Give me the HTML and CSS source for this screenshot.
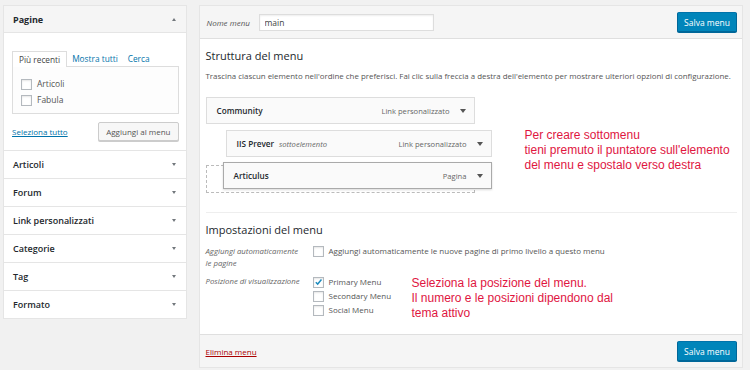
FILE: index.html
```html
<!DOCTYPE html>
<html lang="it">
<head>
  <meta charset="UTF-8">
  <meta name="viewport" content="width=device-width, initial-scale=1">
  <title>Menu</title>
  <link rel="stylesheet" href="styles.css">
</head>
<body>
  <div class="wrap">
    <div class="sidebar">
      <div class="acc open">
        <div class="acc-title">Pagine <span class="arrow up"></span></div>
        <div class="acc-body">
          <div class="tabs">
            <span class="tab active">Più recenti</span>
            <span class="tab">Mostra tutti</span>
            <span class="tab">Cerca</span>
          </div>
          <div class="tab-panel">
            <label class="check-row"><span class="cb"></span>Articoli</label>
            <label class="check-row"><span class="cb"></span>Fabula</label>
          </div>
          <div class="add-row">
            <a class="select-all" href="#">Seleziona tutto</a>
            <button class="btn">Aggiungi al menu</button>
          </div>
        </div>
      </div>
      <div class="acc"><div class="acc-title">Articoli <span class="arrow"></span></div></div>
      <div class="acc"><div class="acc-title">Forum <span class="arrow"></span></div></div>
      <div class="acc"><div class="acc-title">Link personalizzati <span class="arrow"></span></div></div>
      <div class="acc"><div class="acc-title">Categorie <span class="arrow"></span></div></div>
      <div class="acc"><div class="acc-title">Tag <span class="arrow"></span></div></div>
      <div class="acc"><div class="acc-title">Formato <span class="arrow"></span></div></div>
    </div>

    <div class="menu-edit">
      <div class="menu-head">
        <span class="name-label">Nome menu</span>
        <input class="name-input" type="text" value="main">
        <button class="btn primary">Salva menu</button>
      </div>

      <div class="menu-body">
        <h3>Struttura del menu</h3>
        <p class="desc">Trascina ciascun elemento nell'ordine che preferisci. Fai clic sulla freccia a destra dell'elemento per mostrare ulteriori opzioni di configurazione.</p>

        <div class="structure">
          <ul class="menu-items">
            <li class="item">
              <div class="bar"><span class="title">Community</span><span class="type">Link personalizzato</span><span class="arrow"></span></div>
            </li>
            <li class="item depth-1">
              <div class="bar"><span class="title">IIS Prever</span><span class="sub">sottoelemento</span><span class="type">Link personalizzato</span><span class="arrow"></span></div>
            </li>
            <li class="placeholder">
              <div class="bar dragging"><span class="title">Articulus</span><span class="type">Pagina</span><span class="arrow"></span></div>
            </li>
          </ul>
          <p class="note note-sub">Per creare sottomenu<br>tieni premuto il puntatore sull'elemento<br>del menu e spostalo verso destra</p>
        </div>

        <div class="settings">
          <h3>Impostazioni del menu</h3>
          <div class="setting-row auto-add">
            <div class="setting-label">Aggiungi automaticamente le pagine</div>
            <label class="check-row"><span class="cb"></span>Aggiungi automaticamente le nuove pagine di primo livello a questo menu</label>
          </div>
          <div class="setting-row">
            <div class="setting-label">Posizione di visualizzazione</div>
            <div class="locations">
              <label class="check-row"><span class="cb checked"><svg width="10" height="10" viewBox="0 0 10 10"><path d="M2 5.2 L4.1 7.3 L8.3 2.2" fill="none" stroke="#1e8cbe" stroke-width="1.6"/></svg></span>Primary Menu</label>
              <label class="check-row"><span class="cb"></span>Secondary Menu</label>
              <label class="check-row"><span class="cb"></span>Social Menu</label>
            </div>
            <p class="note note-loc">Seleziona la posizione del menu.<br>Il numero e le posizioni dipendono dal<br>tema attivo</p>
          </div>
        </div>
      </div>

      <div class="menu-foot">
        <a class="delete" href="#">Elimina menu</a>
        <button class="btn primary">Salva menu</button>
      </div>
    </div>
  </div>
</body>
</html>
```

FILE: styles.css
```css
body { margin: 0; background: #f1f1f1; font-family: 'Open Sans', sans-serif; font-size: 8.5px; color: #444; }
.wrap { display: flex; gap: 12px; padding: 5px 7px 0 3px; }

/* sidebar */
.sidebar { width: 182px; border: 1px solid #e5e5e5; border-bottom: none; align-self: flex-start; }
.acc { background: #fff; border-bottom: 1px solid #e5e5e5; }
.acc-title { height: 27px; display: flex; align-items: center; justify-content: space-between; padding: 0 10px 0 9px;
             font-size: 9px; font-weight: 600; color: #23282d; }
.acc.open .acc-title { background: #f5f5f5; border-bottom: 1px solid #e5e5e5; height: 26px; font-weight: 700; }
.arrow { width: 0; height: 0; border-left: 2.5px solid transparent; border-right: 2.5px solid transparent; border-top: 3px solid #72777c; }
.arrow.up { border-top: none; border-bottom: 3px solid #72777c; }
.acc-body { padding: 17px 7px 11px 8px; height: 89px; }
.tabs { display: flex; align-items: flex-end; height: 16px; }
.tab { padding: 0 5px; line-height: 15px; color: #0073aa; font-size: 8.3px; }
.tab.active { color: #444; background: #fff; border: 1px solid #ddd; border-bottom: none; position: relative; top: 1px; z-index: 1; padding: 0 6px; }
.tab-panel { border: 1px solid #ddd; background: #fdfdfd; padding: 9px 8px 5px; height: 32px; }
.check-row { display: flex; align-items: center; gap: 5px; line-height: 16px; color: #555; }
.cb { width: 9px; height: 9px; border: 1px solid #b4b9be; background: #fff; box-shadow: inset 0 1px 2px rgba(0,0,0,0.1);
      display: inline-flex; align-items: center; justify-content: center; flex: none; }
.add-row { display: flex; justify-content: space-between; align-items: center; margin-top: 8px; }
.select-all { color: #0073aa; text-decoration: underline; font-size: 8px; }
.btn { font-family: inherit; font-size: 8px; height: 19px; padding: 0 7px; border: 1px solid #ccc; border-radius: 2px;
       background: #f7f7f7; color: #555; box-shadow: 0 1px 0 #ccc; }

/* main panel */
.menu-edit { width: 546px; height: 363px; border: 1px solid #e5e5e5; background: #fff; display: flex; flex-direction: column; box-sizing: border-box; }
.menu-head { height: 32px; background: #f5f5f5; border-bottom: 1px solid #dfdfdf; display: flex; align-items: center; padding: 0 5px 0 7px; }
.name-label { font-style: italic; color: #555; width: 52px; font-size: 8px; }
.name-input { font-family: inherit; font-size: 8.5px; color: #444; width: 175px; height: 17px; box-sizing: border-box; border: 1px solid #ddd;
              padding: 0 5px; box-shadow: inset 0 1px 2px rgba(0,0,0,0.07); }
.btn.primary { margin-left: auto; width: 60px; height: 20px; padding: 0; background: #0085ba; border-color: #0073aa #006799 #006799;
               color: #fff; box-shadow: 0 1px 0 #006799; font-size: 8.5px; }
.menu-body { flex: 1; padding: 0 5px 0 6px; }
h3 { font-size: 11px; font-weight: 400; color: #23282d; margin: 10px 0 0; line-height: 14px; }
.desc { margin: 7px 0 0; line-height: 12px; font-size: 7.9px; color: #555; }

.structure { display: flex; align-items: flex-start; border-bottom: 1px solid #eee; padding-bottom: 19px; }
.menu-items { list-style: none; margin: 15px 0 0; padding: 0; width: 286px; }
.item { width: 269px; margin-bottom: 6px; }
.item.depth-1 { margin-left: 20px; width: 266px; }
.bar { height: 27px; box-sizing: border-box; border: 1px solid #ddd; background: #fafafa; display: flex; align-items: center; padding: 0 8px 0 10px; }
.bar .title { font-weight: 600; color: #23282d; font-size: 8.2px; }
.bar .sub { font-style: italic; color: #666; margin-left: 5px; font-size: 7.6px; }
.bar .type { margin-left: auto; margin-right: 10px; color: #666; font-size: 7.6px; }
.bar .arrow { border-top-color: #555; border-width: 4px 3px 0; }
.placeholder { width: 269px; height: 28px; box-sizing: border-box; border: 1px dashed #bbb; margin-top: 8px; position: relative; }
.bar.dragging { position: absolute; left: 16px; top: -4px; width: 269px; border-color: #aaa; box-shadow: 0 1px 2px rgba(0,0,0,0.15); }

.note { font-family: 'Liberation Sans', Arial, sans-serif; font-size: 12px; line-height: 15px; color: #e0163f; margin: 0; }
.note-sub { margin: 46px 0 0 33px; }

.setting-row { display: flex; align-items: flex-start; margin-top: 8px; }
.setting-row + .setting-row { margin-top: 6px; }
.setting-label { width: 98px; margin-right: 9px; font-style: italic; color: #666; line-height: 12px; font-size: 7.8px; }
.settings .check-row { line-height: 14px; font-size: 8px; }
.auto-add .check-row { line-height: 12px; }
.locations { width: 99px; }
.note-loc { margin-top: 1px; }

.menu-foot { height: 32px; background: #f5f5f5; border-top: 1px solid #dfdfdf; display: flex; align-items: center; padding: 0 5px 0 6px; }
.delete { color: #a00; text-decoration: underline; font-size: 8px; }
```
